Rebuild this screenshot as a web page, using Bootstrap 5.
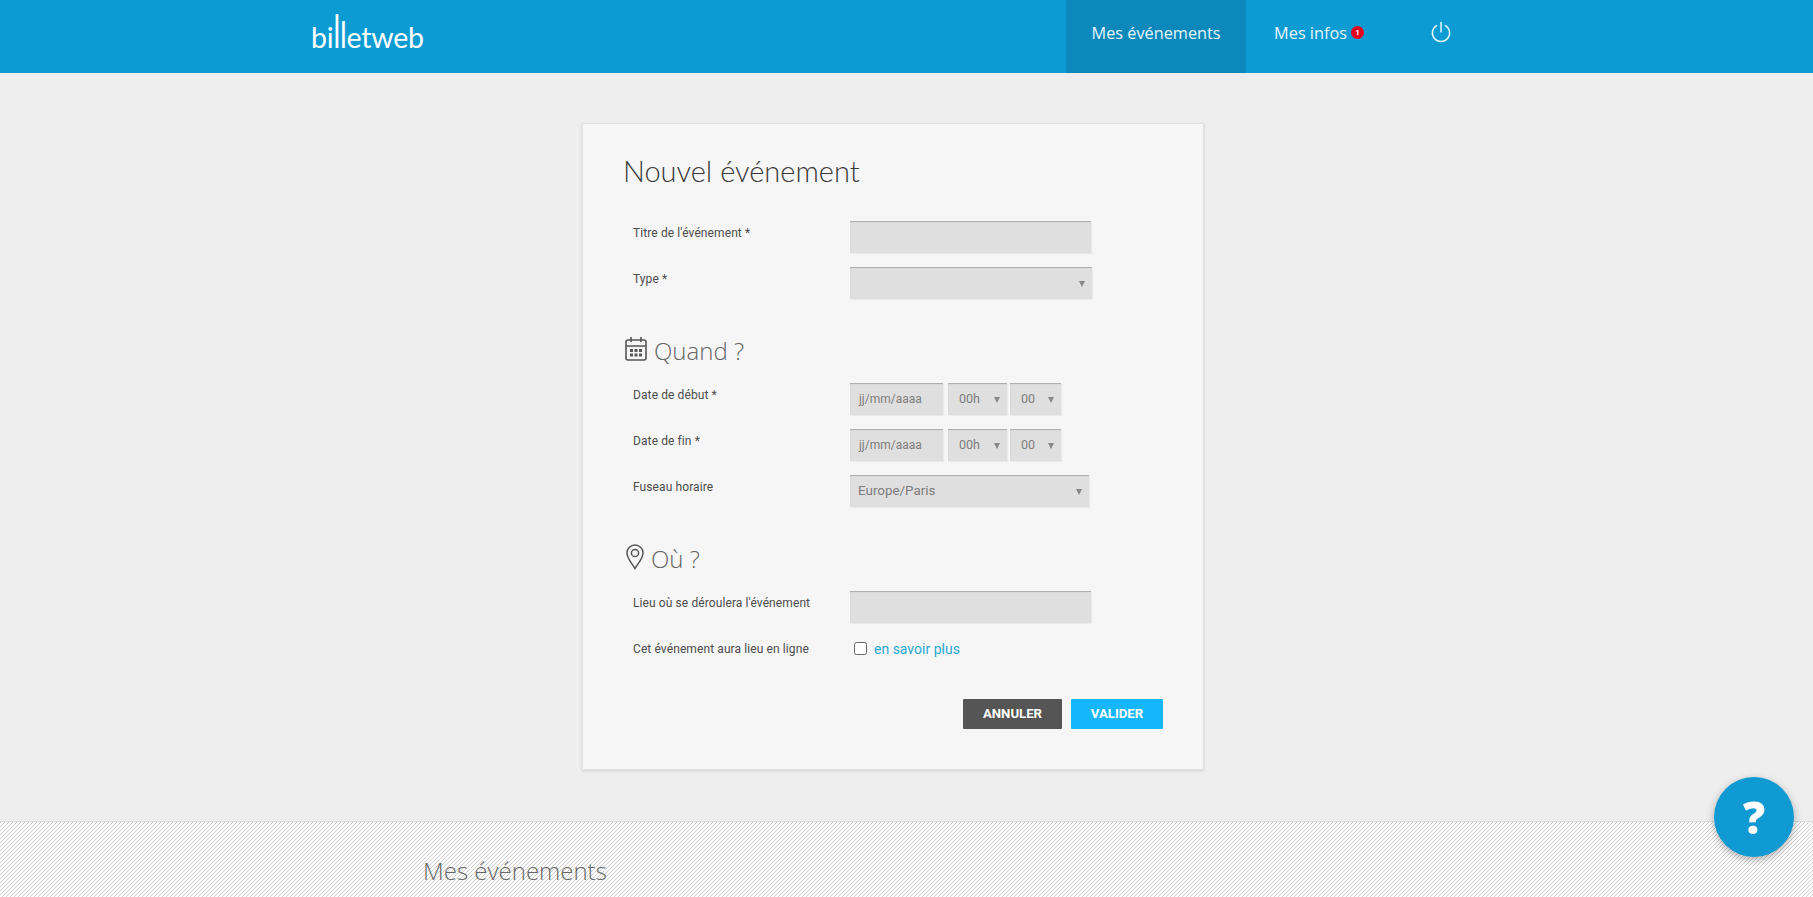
<!DOCTYPE html>
<html lang="fr">
<head>
<meta charset="utf-8">
<title>Billetweb</title>
<link href="https://cdn.jsdelivr.net/npm/bootstrap@5.3.0/dist/css/bootstrap.min.css" rel="stylesheet">
<style>
html,body{height:897px;overflow:hidden}
body{background:#eee;font-family:"Roboto","Liberation Sans",sans-serif;color:#555}
.topbar{height:73px;background:#0d9bd3;padding-left:311px;padding-right:361px}
.brand{font-family:"Lato","Liberation Sans",sans-serif;font-size:28.500px;line-height:1;color:#fff;text-decoration:none;letter-spacing:-.2px;margin-top:18px;height:33px;display:flex;align-items:flex-end}
.brand span{display:inline-block;transform-origin:50% 85%}
.brand .tall1{transform:scaleY(1.6)}
.brand .tall2{transform:scaleY(1.3)}
.topnav a{font-family:"Open Sans","Liberation Sans",sans-serif;font-size:16.300px;color:#e6f6fc;text-decoration:none;display:flex;align-items:center;height:73px}
.topnav .navcur{width:180px;background:#0c88ba;justify-content:center;padding-bottom:6px}
.topnav .navinfo{margin-left:28px;padding-bottom:6px;position:relative}
.topnav .navpow{margin-left:66px;padding-bottom:10px}
.redpill{display:inline-block;width:13px;height:13px;border-radius:50%;background:#e3001b;color:#fff;font-size:8px;font-weight:700;line-height:13px;text-align:center;margin:-2px 0 0 4px;font-family:"Roboto",sans-serif}
.formbox{width:622px;margin:50px 0 51px 582px;height:647px;background:#f6f6f6;border:1px solid #e2e2e2;box-shadow:0 1px 3px rgba(0,0,0,.12);padding:0 40px}
.pagetitle{font-family:"Lato","Open Sans",sans-serif;font-weight:300;font-size:29px;line-height:40px;color:#3a3a3a;margin:0;padding-top:27px;height:97px}
.secthead{font-family:"Open Sans",sans-serif;font-weight:300;font-size:24px;color:#666;height:70px;display:flex;align-items:flex-end;margin:0;padding-bottom:15px;line-height:34px}
.secthead svg{margin-bottom:6px}
.fieldrow{display:flex;height:32px;margin-bottom:14px}
.fieldrow label{width:227px;padding:2px 0 0 10px;font-size:12px;letter-spacing:.1px;line-height:20px;color:#4d4d4d}
.boxy{height:32px;background:#e0dfdf;border:0;border-radius:0;box-shadow:inset 1px 2px 1px -1px #aaa,1px 1px 1px #eaeaea;font-size:13.400px;color:#7d7d7d;display:flex;align-items:center;position:relative;flex:none;font-family:"Roboto",sans-serif}
.boxy.arrowed::after{content:"";position:absolute;right:7px;top:14px;border-left:3.5px solid transparent;border-right:3.5px solid transparent;border-top:6px solid #888}
.w-a{width:241px}.w-b{width:242px}.w-c{width:93px;padding-left:9px;font-size:12px}.w-d{width:59px;margin-left:5px;padding-left:11px;font-size:12.500px}.w-e{width:51px;margin-left:3px;padding-left:11px;font-size:12.500px}.w-f{width:239px;padding-left:8px}
.savoir{color:#2aa8d4;text-decoration:none;font-size:14px;margin-left:7px;line-height:20px;padding-top:2px}
.tick{width:13px;height:13px;border:1px solid #666;border-radius:2.5px;background:#fff;margin:5px 0 0 4px;flex:none}
.actbtn{height:30px;border-radius:1px;border:0;color:#fff;font-size:13.200px;font-weight:700;padding:0;font-family:"Roboto",sans-serif}
.actgrey{width:99px;background:#555}
.actblue{width:92px;background:#16b6fb;margin-left:9px}
.actrow{display:flex;justify-content:flex-end;padding-top:16px}
.stripes{height:76px;background-color:#fff;background-image:linear-gradient(135deg,#cfcfcf 12.5%,#fff 12.5%,#fff 50%,#cfcfcf 50%,#cfcfcf 62.5%,#fff 62.5%);background-size:4px 4px;border-top:1px solid #e0e0e0;padding-left:423px;padding-top:29px}
.stripes h2{font-family:"Open Sans",sans-serif;font-weight:300;font-size:24px;line-height:40px;color:#666;margin:0}
.helpdot{position:fixed;left:1714px;top:777px;width:80px;height:80px;border-radius:50%;background:#0f9ad3;box-shadow:0 3px 8px rgba(0,0,0,.3);color:#fff;font-family:"Open Sans",sans-serif;font-weight:800;font-size:44px;display:flex;align-items:center;justify-content:center;line-height:1;text-decoration:none}
.calicon{margin:0 6px 6px 1px}
.pinicon{margin:0 7px 6px 3px}
</style>
</head>
<body>
<header class="topbar d-flex justify-content-between">
  <a class="brand" href="#">bi<span class="tall1">l</span><span class="tall2">l</span>etweb</a>
  <nav class="topnav d-flex">
    <a class="navcur" href="#">Mes événements</a>
    <a class="navinfo" href="#">Mes infos<span class="redpill">1</span></a>
    <a class="navpow" href="#" aria-label="Déconnexion">
      <svg width="22" height="22" viewBox="0 0 22 22" fill="none" stroke="#e6f6fc" stroke-width="1.5" stroke-linecap="round"><path d="M11 1.5V11"/><path d="M6.6 4.6a8.6 8.6 0 1 0 8.8 0"/></svg>
    </a>
  </nav>
</header>
<main class="formbox">
  <h1 class="pagetitle">Nouvel événement</h1>
  <div class="fieldrow"><label>Titre de l'événement *</label><div class="boxy w-a"></div></div>
  <div class="fieldrow"><label>Type *</label><div class="boxy w-b arrowed"></div></div>
  <h3 class="secthead">
    <svg class="calicon" width="24" height="26" viewBox="0 0 24 26" fill="none" stroke="#555" stroke-width="1.6"><rect x="2" y="4" width="20" height="20" rx="2"/><path d="M2 10h20M7 1v5M17 1v5"/><g fill="#555" stroke="none"><rect x="6" y="13" width="3" height="3"/><rect x="10.500" y="13" width="3" height="3"/><rect x="15" y="13" width="3" height="3"/><rect x="6" y="17.500" width="3" height="3"/><rect x="10.500" y="17.500" width="3" height="3"/><rect x="15" y="17.500" width="3" height="3"/></g></svg>
    Quand ?
  </h3>
  <div class="fieldrow"><label>Date de début *</label><div class="boxy w-c">jj/mm/aaaa</div><div class="boxy w-d arrowed">00h</div><div class="boxy w-e arrowed">00</div></div>
  <div class="fieldrow"><label>Date de fin *</label><div class="boxy w-c">jj/mm/aaaa</div><div class="boxy w-d arrowed">00h</div><div class="boxy w-e arrowed">00</div></div>
  <div class="fieldrow"><label>Fuseau horaire</label><div class="boxy w-f arrowed">Europe/Paris</div></div>
  <h3 class="secthead">
    <svg class="pinicon" width="18" height="26" viewBox="0 0 18 26" fill="none" stroke="#555" stroke-width="1.5"><path d="M9 24.500C6 19.500 1 14.500 1 9a8 8 0 0 1 16 0c0 5.500-5 10.500-8 15.500z"/><circle cx="9" cy="9" r="3.600"/></svg>
    Où ?
  </h3>
  <div class="fieldrow"><label>Lieu où se déroulera l'événement</label><div class="boxy w-a"></div></div>
  <div class="fieldrow"><label>Cet événement aura lieu en ligne</label><span class="tick"></span><a class="savoir" href="#">en savoir plus</a></div>
  <div class="actrow"><button class="actbtn actgrey" type="button">ANNULER</button><button class="actbtn actblue" type="button">VALIDER</button></div>
</main>
<section class="stripes"><h2>Mes événements</h2></section>
<a class="helpdot" href="#">?</a>
<script src="https://cdn.jsdelivr.net/npm/bootstrap@5.3.0/dist/js/bootstrap.bundle.min.js"></script>
</body>
</html>
